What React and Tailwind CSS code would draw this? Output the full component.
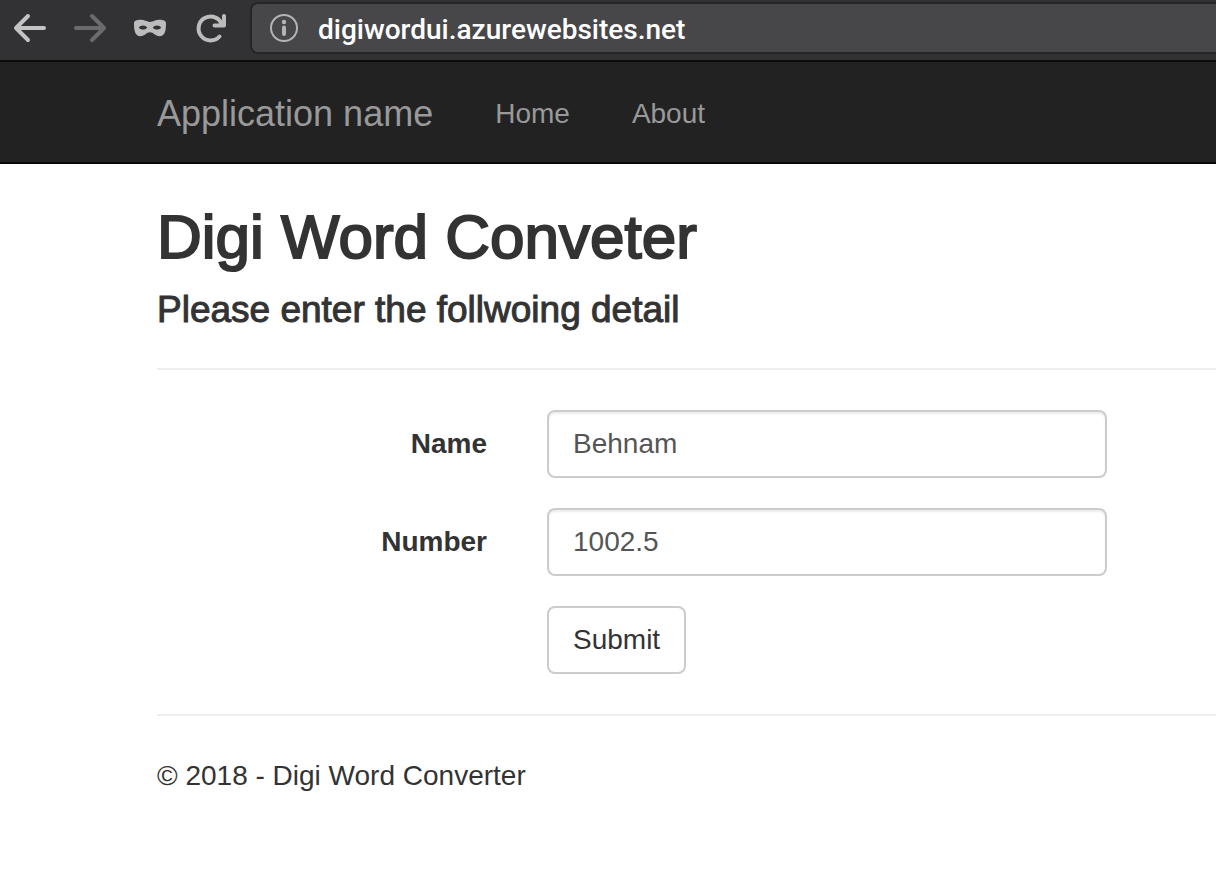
import { useState } from "react";

const stroke = {
  fill: "none",
  stroke: "currentColor",
  strokeWidth: 4,
  strokeLinecap: "round",
  strokeLinejoin: "round",
};

function ToolButton({ label, className, children }) {
  return (
    <button
      type="button"
      aria-label={label}
      className={`flex h-14 w-15 shrink-0 items-center justify-center ${className}`}
    >
      <svg viewBox="0 0 40 40" className="size-10" aria-hidden="true">
        {children}
      </svg>
    </button>
  );
}

function BrowserBar() {
  const [url, setUrl] = useState("digiwordui.azurewebsites.net");
  return (
    <div className="flex h-[62px] border-b-2 border-[#0c0c0c] bg-[#323234]">
      <ToolButton label="Back" className="text-[#c4c4c4]">
        <path {...stroke} d="M34 20H6M18 8L6 20l12 12" />
      </ToolButton>
      <ToolButton label="Forward" className="text-[#6b6b6d]">
        <path {...stroke} d="M6 20h28M22 8l12 12-12 12" />
      </ToolButton>
      <ToolButton label="Private browsing" className="text-[#bcbcbc]">
        <path
          fill="currentColor"
          fillRule="evenodd"
          d="M4 15.500C4 12.500 7 11.800 10.500 11.800C14.500 11.800 17 14 20 14C23 14 25.500 11.800 29.500 11.800C33 11.800 36 12.500 36 15.500C36 21 35.500 28.200 29.500 28.200C25.500 28.200 23.500 24.300 20 24.300C16.500 24.300 14.500 28.200 10.500 28.200C4.500 28.200 4 21 4 15.500ZM8.800 19.500C10.500 16.700 15.500 16.700 17.200 19.500C15.500 22.200 10.500 22.200 8.800 19.500ZM31.200 19.500C29.500 16.700 24.500 16.700 22.800 19.500C24.500 22.200 29.500 22.200 31.200 19.500Z"
        />
      </ToolButton>
      <ToolButton label="Reload" className="text-[#bcbcbc]">
        <path {...stroke} d="M29.500 28.500A12 12 0 1 1 31 14.500" />
        <path {...stroke} d="M34 8v9.500H24.500" />
        <path fill="currentColor" d="M28 16.500L33 11v6Z" />
      </ToolButton>
      <div className="ml-[10px] mt-[2px] flex h-[52px] grow items-center rounded-l-lg border-2 border-r-0 border-[#262627] bg-[#474749] pl-4">
        <svg viewBox="0 0 32 32" className="size-8 shrink-0 text-[#b4b4b5]" aria-hidden="true">
          <circle cx="16" cy="16" r="13" fill="none" stroke="currentColor" strokeWidth="2" />
          <circle cx="16" cy="10" r="2.200" fill="currentColor" />
          <path d="M16 15.500v6.500" stroke="currentColor" strokeWidth="4" strokeLinecap="round" />
        </svg>
        <input
          aria-label="Address"
          value={url}
          onChange={(e) => setUrl(e.target.value)}
          className="ml-[18px] min-w-0 grow bg-transparent pt-1 font-[Roboto,sans-serif] text-[28px] font-medium leading-10 text-white outline-none"
        />
      </div>
    </div>
  );
}

function Field({ id, label, initial }) {
  const [value, setValue] = useState(initial);
  return (
    <div className="flex gap-15">
      <label htmlFor={id} className="w-[330px] shrink-0 pt-[14px] text-right font-bold">
        {label}
      </label>
      <input
        id={id}
        value={value}
        onChange={(e) => setValue(e.target.value)}
        className="h-[68px] w-full min-w-0 max-w-[560px] rounded-lg border-2 border-[#ccc] bg-white px-6 text-[#555] shadow-[inset_0_2px_2px_rgba(0,0,0,0.075)] outline-none"
      />
    </div>
  );
}

export default function App() {
  return (
    <div className="min-h-screen bg-white font-['Liberation_Sans',sans-serif] text-[28px] leading-10 text-[#333]">
      <BrowserBar />
      <nav className="flex h-[102px] items-center gap-[62px] border-b-2 border-[#080808] bg-[#222] pl-[157px] pt-1 text-[#999]">
        <a href="#" className="text-[36px]">Application name</a>
        <a href="#home">Home</a>
        <a href="#about">About</a>
      </nav>
      <main className="pl-[157px] pt-10">
        <h2 className="text-[62px] leading-[66px] [-webkit-text-stroke:2px_#333]">Digi Word Conveter</h2>
        <h4 className="mt-5 text-[37px] [-webkit-text-stroke:1px_#333]">Please enter the follwoing detail</h4>
        <hr className="mb-10 mt-[38px] border-t-2 border-[#eee]" />
        <form className="flex flex-col gap-[30px]" onSubmit={(e) => e.preventDefault()}>
          <Field id="name" label="Name" initial="Behnam" />
          <Field id="number" label="Number" initial="1002.5" />
          <div className="pl-[390px]">
            <button type="submit" className="h-[68px] rounded-lg border-2 border-[#ccc] bg-white px-6">
              Submit
            </button>
          </div>
        </form>
        <hr className="my-10 border-t-2 border-[#eee]" />
        <footer>
          <p>© 2018 - Digi Word Converter</p>
        </footer>
      </main>
    </div>
  );
}
